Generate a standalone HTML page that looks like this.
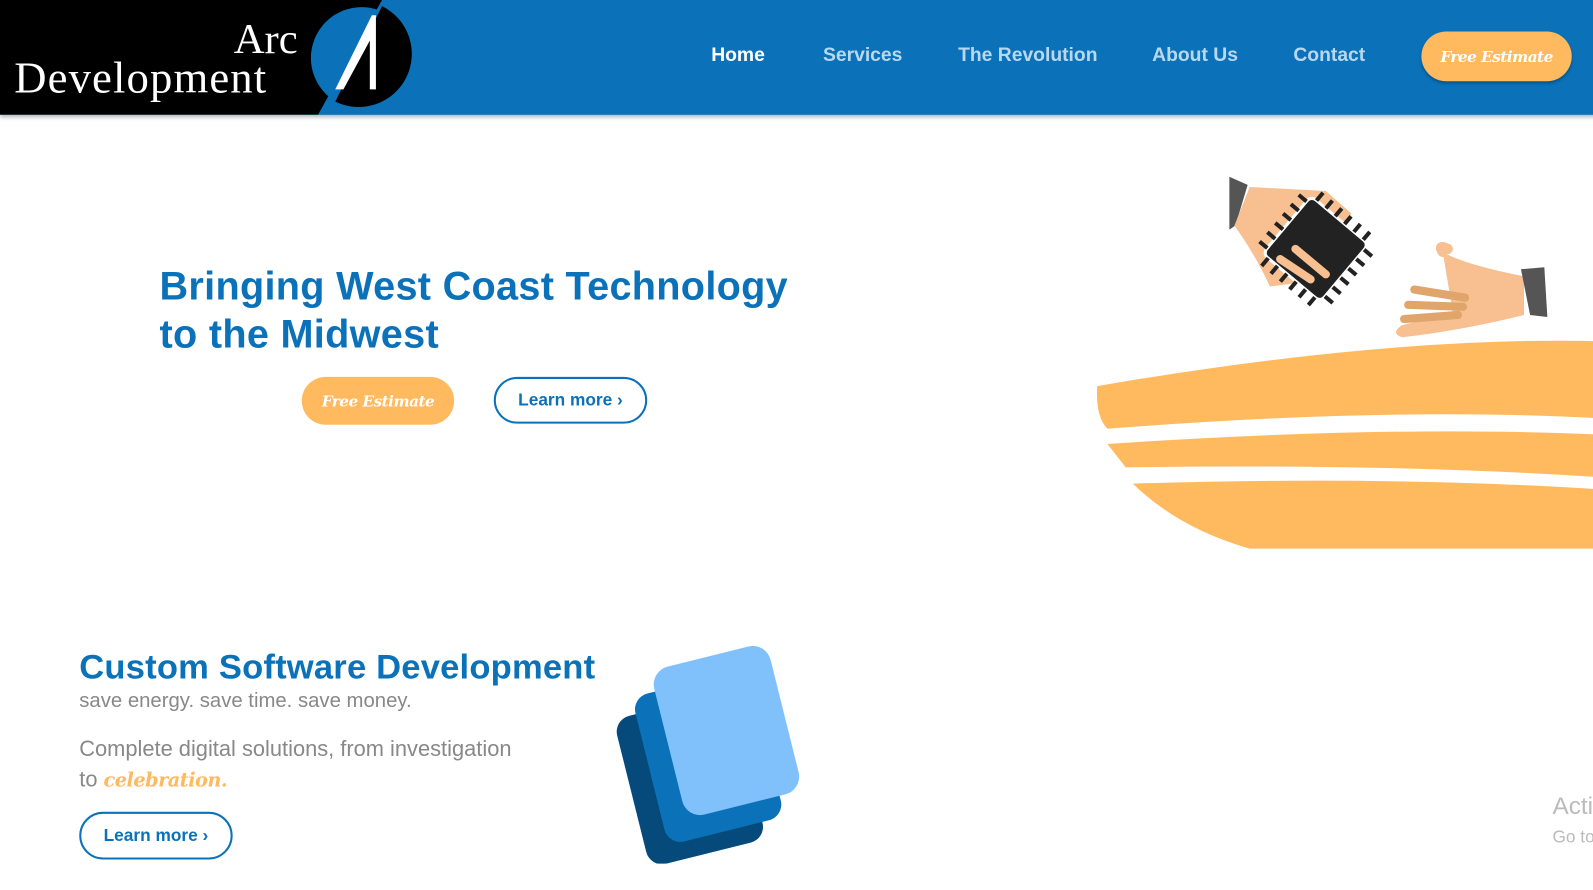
<!DOCTYPE html>
<html><head><meta charset="utf-8"><style>
*{margin:0;padding:0;box-sizing:border-box}
body{width:1593px;height:890px;overflow:hidden;background:#fff;font-family:"Liberation Sans",sans-serif;position:relative}
#w{position:absolute;left:0;top:0;width:1568px;height:876px;transform:scale(1.016);transform-origin:0 0}
.hdr{position:absolute;left:0;top:0;width:1600px;height:113px;background:#0b72b9;box-shadow:0 2px 4px rgba(0,0,0,.3)}
.nav{position:absolute;top:44px;color:#b8d8f0;font-weight:bold;font-size:19px}
.script{font-family:"DejaVu Serif","Liberation Serif",serif;font-style:italic;font-weight:bold;color:#fff;letter-spacing:-.5px}
.btnO{position:absolute;background:#ffba60;border-radius:30px;color:#fff;display:flex;align-items:center;justify-content:center}
.btnL{position:absolute;border:2px solid #0b72b9;border-radius:25px;color:#0b72b9;font-weight:bold;font-size:17px;display:flex;align-items:center;justify-content:center}
h1{position:absolute;left:157px;top:259px;color:#0b72b9;font-size:39px;line-height:47px;font-weight:bold;letter-spacing:.3px}
</style></head><body><div id="w">
<div class="hdr"></div>
<svg style="position:absolute;left:0;top:0" width="410" height="113">
<polygon points="0,0 376,0 313,113 0,113" fill="#000"/>
<circle cx="356" cy="57" r="50" fill="#0b72b9"/>
<path d="M376,6 A50,50 0 0 1 330,100 Z" fill="#000"/>
<polygon points="366,15 370,15 370,88 364,88 364,40 338,88 330,88" fill="#fff"/>
<text x="293" y="52" text-anchor="end" font-family="Liberation Serif" font-size="42" fill="#fff">Arc</text>
<text x="14" y="91" font-family="Liberation Serif" font-size="44" fill="#fff" textLength="248">Development</text>
</svg>
<div class="nav" style="left:700px;color:#fff">Home</div>
<div class="nav" style="left:810px">Services</div>
<div class="nav" style="left:943px">The Revolution</div>
<div class="nav" style="left:1134px">About Us</div>
<div class="nav" style="left:1273px">Contact</div>
<div class="btnO script" style="left:1399px;top:31px;width:148px;height:49px;font-size:15px;box-shadow:0 2px 3px rgba(0,0,0,.3)">Free Estimate</div>

<h1>Bringing West Coast Technology<br>to the Midwest</h1>
<div class="btnO script" style="left:297px;top:371px;width:150px;height:47px;font-size:15px">Free Estimate</div>
<div class="btnL" style="left:486px;top:371px;width:151px;height:46px">Learn more ›</div>

<svg style="position:absolute;left:1070px;top:160px" width="510" height="390">
<path d="M10,220 Q300,170 510,176 L510,252 Q300,240 20,262 Q8,250 10,220Z" fill="#ffba60"/>
<path d="M20,277 Q300,258 510,268 L510,310 Q300,296 38,300Z" fill="#ffba60"/>
<path d="M45,316 Q300,308 510,322 L510,380 L160,380 Q90,360 45,316Z" fill="#ffba60"/>
<polygon points="140,14 158,22 146,62 140,66" fill="#555"/>
<path d="M160,24 L235,28 L260,50 L235,115 L180,122 Q165,90 145,62Z" fill="#f8c090"/>
<g transform="rotate(40 225 85)"><rect x="188" y="48" width="74" height="74" rx="6" fill="#222" stroke="#fff" stroke-width="3"/>
<g stroke="#222" stroke-width="4"><path d="M195,48v-10M207,48v-10M219,48v-10M231,48v-10M243,48v-10M255,48v-10M195,122v10M207,122v10M219,122v10M231,122v10M243,122v10M255,122v10M188,55h-10M188,67h-10M188,79h-10M188,91h-10M188,103h-10M188,115h-10M262,55h10M262,67h10M262,79h10M262,91h10M262,103h10M262,115h10"/></g></g>
<path d="M190,95 L220,115 M205,85 L235,110" stroke="#f8c090" stroke-width="8" stroke-linecap="round"/>
<path d="M350,88 Q370,100 430,112 L430,150 Q370,165 310,172 Q298,168 310,160 L360,148" fill="#f8c090"/>
<path d="M350,88 Q345,80 355,85" fill="#f8c090" stroke="#f8c090" stroke-width="10" stroke-linecap="round"/>
<path d="M322,125 L372,133 M316,140 L370,142 M312,154 L365,150" stroke="#e0a56a" stroke-width="8" stroke-linecap="round"/>
<polygon points="427,105 450,103 453,152 436,150" fill="#555"/>
</svg>

<div style="position:absolute;left:78px;top:638px;color:#0b72b9;font-size:34px;font-weight:bold;letter-spacing:.2px">Custom Software Development</div>
<div style="position:absolute;left:78px;top:679px;color:#888;font-size:20px">save energy. save time. save money.</div>
<div style="position:absolute;left:78px;top:722px;color:#888;font-size:21.5px;line-height:30px">Complete digital solutions, from investigation<br>to <span class="script" style="color:#ffba60;font-size:19px">celebration.</span></div>
<div class="btnL" style="left:78px;top:799px;width:151px;height:47px">Learn more ›</div>

<svg style="position:absolute;left:600px;top:630px" width="200" height="220">
<rect x="20" y="62" width="118" height="150" rx="16" fill="#054a7a" transform="rotate(-14 79 137)"/>
<rect x="38" y="40" width="118" height="150" rx="16" fill="#0b72b9" transform="rotate(-14 97 115)"/>
<rect x="56" y="14" width="118" height="150" rx="18" fill="#80c1fb" transform="rotate(-14 115 89)"/>
</svg>

<div style="position:absolute;left:1528px;top:780px;color:#bbb;font-size:24px;white-space:nowrap">Activate</div>
<div style="position:absolute;left:1528px;top:814px;color:#bbb;font-size:17px;white-space:nowrap">Go to Settings</div>
</div></body></html>
